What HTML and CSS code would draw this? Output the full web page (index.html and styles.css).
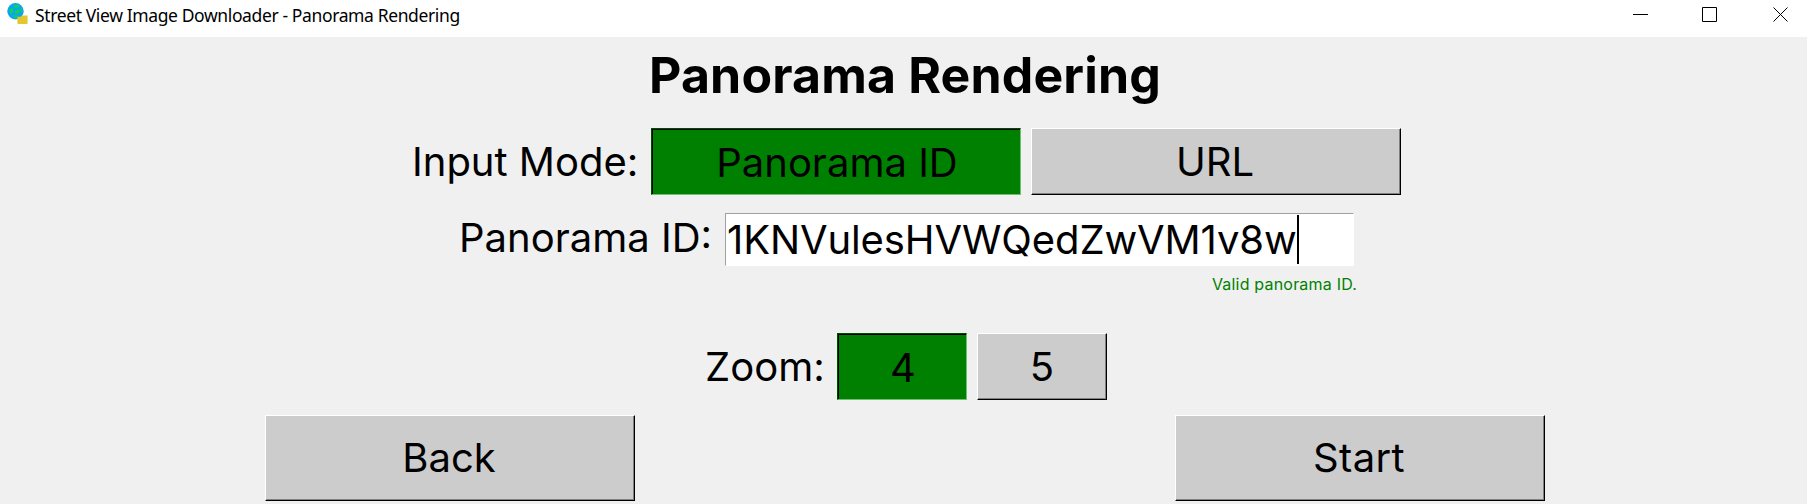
FILE: index.html
```html
<!DOCTYPE html>
<html lang="en">
<head>
<meta charset="utf-8">
<title>Street View Image Downloader - Panorama Rendering</title>
<link rel="stylesheet" href="styles.css">
</head>
<body>
<header class="titlebar">
  <svg class="app-icon" width="22" height="22" viewBox="0 0 22 22">
    <circle cx="8.5" cy="8.3" r="8.2" fill="#0aa5ee"/>
    <path d="M6 2.5 9 1.6 13 2.6 11.5 4.5 8 5ZM3 5.5 5.5 5 6.5 8 4.5 11 2.5 9ZM8 7.500 11.500 6.500 13 8.500 11 11 8 10.500ZM13.500 4.500 15.300 7 14.500 10 13.300 8ZM5.500 12.500 9 12 12 13.500 8.500 15.200Z" fill="#10cf62"/>
    <path d="M11.500 13.800h2.500l1-1.300h5.600v1.300v6.200q0 1-1 1h-8.100q-1.100 0-1.100-1v-5.200q0-1 1.100-1Z" fill="#e3c72d"/>
  </svg>
  <span class="window-title">Street View Image Downloader - Panorama Rendering</span>
  <svg class="controls" width="150" height="16" viewBox="0 0 150 16" fill="none" stroke="#000">
    <path d="M0 7.500h15M69.500.5h14v14h-14Z"/>
    <path d="M140.500.5l14 14M154.500.5l-14 14"/>
  </svg>
</header>
<main>
  <h1>Panorama Rendering</h1>
  <div class="row mode-row">
    <span class="label mode-label">Input Mode:</span>
    <button class="btn active"><span>Panorama ID</span></button>
    <button class="btn"><span>URL</span></button>
  </div>
  <div class="row id-row">
    <span class="label id-label">Panorama ID:</span>
    <div class="entry"><span class="entry-text">1KNVulesHVWQedZwVM1v8w</span><i class="caret"></i></div>
  </div>
  <p class="status">Valid panorama ID.</p>
  <div class="row zoom-row">
    <span class="label zoom-label">Zoom:</span>
    <button class="btn small active"><span>4</span></button>
    <button class="btn small"><span>5</span></button>
  </div>
  <div class="row actions">
    <button class="btn tall">Back</button>
    <button class="btn tall start">Start</button>
  </div>
</main>
</body>
</html>
```
FILE: styles.css
```css
* { box-sizing: border-box; }
body {
  margin: 0;
  width: 1807px;
  height: 504px;
  overflow: hidden;
  background: #f0f0f0;
  color: #000;
  font-family: Inter, sans-serif;
  font-size: 40px;
  font-weight: 400;
}
.titlebar {
  display: flex;
  height: 37px;
  padding: 3px 20px 0 7px;
  background: #fff;
}
.app-icon { flex: none; }
.window-title {
  margin-left: 6px;
  font: 17.5px/25px "Noto Sans", sans-serif;
  letter-spacing: -0.38px;
  white-space: nowrap;
}
.controls { margin: 4px 4px 0 auto; overflow: visible; }
main { display: flex; flex-direction: column; }
h1 {
  margin: 0;
  height: 91px;
  padding: 8px 0 0 3px;
  font-size: 50px;
  line-height: 60px;
  font-weight: 700;
  letter-spacing: 0.15px;
  text-align: center;
}
.row { display: flex; white-space: nowrap; }
.label { flex: none; line-height: 67px; }
.btn {
  display: flex;
  align-items: center;
  justify-content: center;
  flex: none;
  width: 370px;
  height: 67px;
  margin: 0;
  padding: 0 2px 0 0;
  border: 1px solid;
  border-color: #fff #000 #000 #fff;
  box-shadow: inset -1px -1px #808080;
  background: #ccc;
  color: #000;
  font: inherit;
}
.btn.active {
  padding: 0 0 0 2px;
  border-color: #004b00 #6fbf6f #6fbf6f #004b00;
  box-shadow: inset 1px 1px #000;
  background: #008000;
}
.btn.active span { margin-top: 2px; }
.btn.small { width: 130px; }
.btn.small:not(.active) { padding: 0; }
.btn.tall { height: 86px; padding-bottom: 2px; }
.btn.start { letter-spacing: 0.4px; }
.btn + .btn { margin-left: 10px; }
.mode-row { margin-left: 411px; height: 85px; }
.mode-label { width: 240px; padding-left: 1px; }
.id-row { margin-left: 458px; height: 53px; }
.id-label { width: 267px; padding-left: 1px; line-height: 50px; }
.entry {
  display: flex;
  width: 629px;
  height: 53px;
  padding: 1px 0 0 1px;
  border: 1px solid;
  border-color: #a0a0a0 #fff #fff #a0a0a0;
  background: #fff;
  line-height: 50px;
}
.entry-text { width: 570px; letter-spacing: -0.1px; }
.caret { width: 2px; height: 49px; background: #000; }
.status {
  margin: 0;
  height: 67px;
  padding: 8px 450px 0 0;
  color: #008000;
  font-size: 16px;
  line-height: 20px;
  letter-spacing: 0.2px;
  text-align: right;
}
.zoom-row { margin-left: 705px; height: 82px; }
.zoom-label { width: 132px; }
.actions { margin-left: 265px; }
.actions .btn + .btn { margin-left: 540px; }
```
